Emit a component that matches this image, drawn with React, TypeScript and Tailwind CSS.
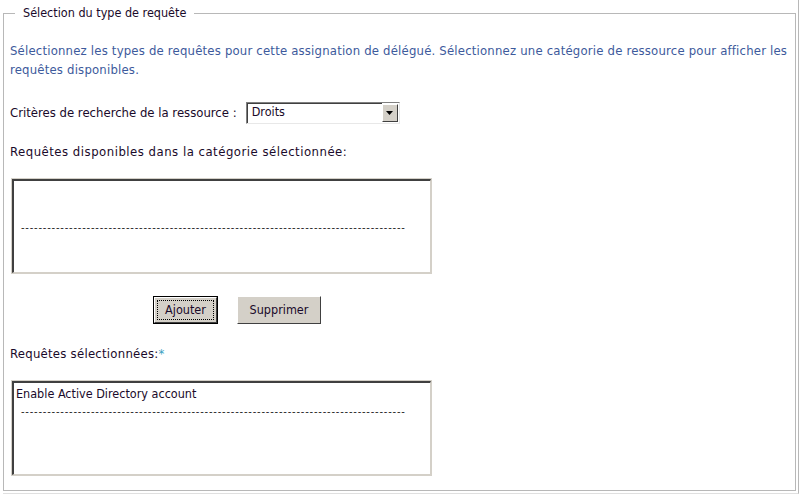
import React from "react";

const font = { fontFamily: '"DejaVu Sans Condensed", "DejaVu Sans", sans-serif' };

function ListBox({ children }: { children?: React.ReactNode }) {
  return (
    <div className="w-[421px] h-[96px] border border-[#d4d0c8] bg-white">
      <div className="h-full border-t-2 border-l-2 border-t-[#404040] border-l-[#404040] border-r border-b border-r-[#d4d0c8] border-b-[#d4d0c8] px-[2px] pt-[3px]">
        {children}
      </div>
    </div>
  );
}

const dashes = "-".repeat(88);

export default function App() {
  return (
    <div className="w-[800px] h-[496px] bg-white text-[13px] text-[#1a0a2a]" style={font}>
      <div className="ml-[3px] w-[796px] h-[494px] border-r border-[#b8b8b8] border-b border-b-[#e0e0e0]">
        <fieldset className="w-[793px] h-[491px] border border-[#b8b8b8]">
          <legend className="ml-[11px] px-[8px] text-[12.5px] leading-[26px]">Sélection du type de requête</legend>
          <div className="pl-[6px] pt-[15px]">
            <p className="text-[13px] leading-[19px] tracking-[0.19px] text-[#3d5a9c] pr-[4px]">
              Sélectionnez les types de requêtes pour cette assignation de délégué. Sélectionnez une catégorie de ressource pour afficher les requêtes disponibles.
            </p>
            <div className="mt-[23px] flex items-center h-[22px]">
              <span className="mr-[9px]">Critères de recherche de la ressource :</span>
              <div className="w-[154px] h-[22px] border-t border-l border-[#808080] border-b border-r border-b-[#e8e8e8] border-r-[#e8e8e8] flex bg-white">
                <div className="flex-1 border-t border-l border-[#404040] flex items-center pl-[4px] pb-[3px] text-[12.5px]">Droits</div>
                <div className="w-[16px] h-[18px] mt-[1px] mr-[1px] bg-[#d4d0c8] border-t border-l border-white border-b border-r border-b-[#404040] border-r-[#404040] flex items-center justify-center">
                  <svg width="8" height="4" viewBox="0 0 8 4"><path d="M0 0H7L3.5 4Z" fill="#000" /></svg>
                </div>
              </div>
            </div>
            <div className="mt-[18px] leading-[20px] tracking-[0.5px]">Requêtes disponibles dans la catégorie sélectionnée:</div>
            <div className="mt-[16px] ml-[1px]">
              <ListBox>
                <div className="pt-[37px] pl-[5px] leading-[14px] text-[#222] tracking-[0.8px] text-[11px]">{dashes}</div>
              </ListBox>
            </div>
            <div className="mt-[22px] flex items-start">
              <button className="ml-[143px] w-[65px] h-[28px] border border-black bg-[#d4d0c8] text-[12.5px]">
                <div className="h-full border-t border-l border-white border-b border-r border-b-[#404040] border-r-[#404040] p-[2px]">
                  <div className="h-full border border-dotted border-black flex items-center justify-center">Ajouter</div>
                </div>
              </button>
              <button className="ml-[19px] w-[84px] h-[28px] bg-[#d4d0c8] border-t border-l border-white border-b border-r border-b-[#404040] border-r-[#404040] flex items-center justify-center text-[12.5px]">
                Supprimer
              </button>
            </div>
            <div className="mt-[20px] leading-[20px] tracking-[0.25px]">Requêtes sélectionnées:<span className="text-[#3aa0c0]">*</span></div>
            <div className="mt-[16px] ml-[1px]">
              <ListBox>
                <div className="leading-[16px] text-[12.5px]">Enable Active Directory account</div>
                <div className="pt-[3px] pl-[5px] leading-[14px] text-[#222] tracking-[0.8px] text-[11px]">{dashes}</div>
              </ListBox>
            </div>
          </div>
        </fieldset>
      </div>
    </div>
  );
}
